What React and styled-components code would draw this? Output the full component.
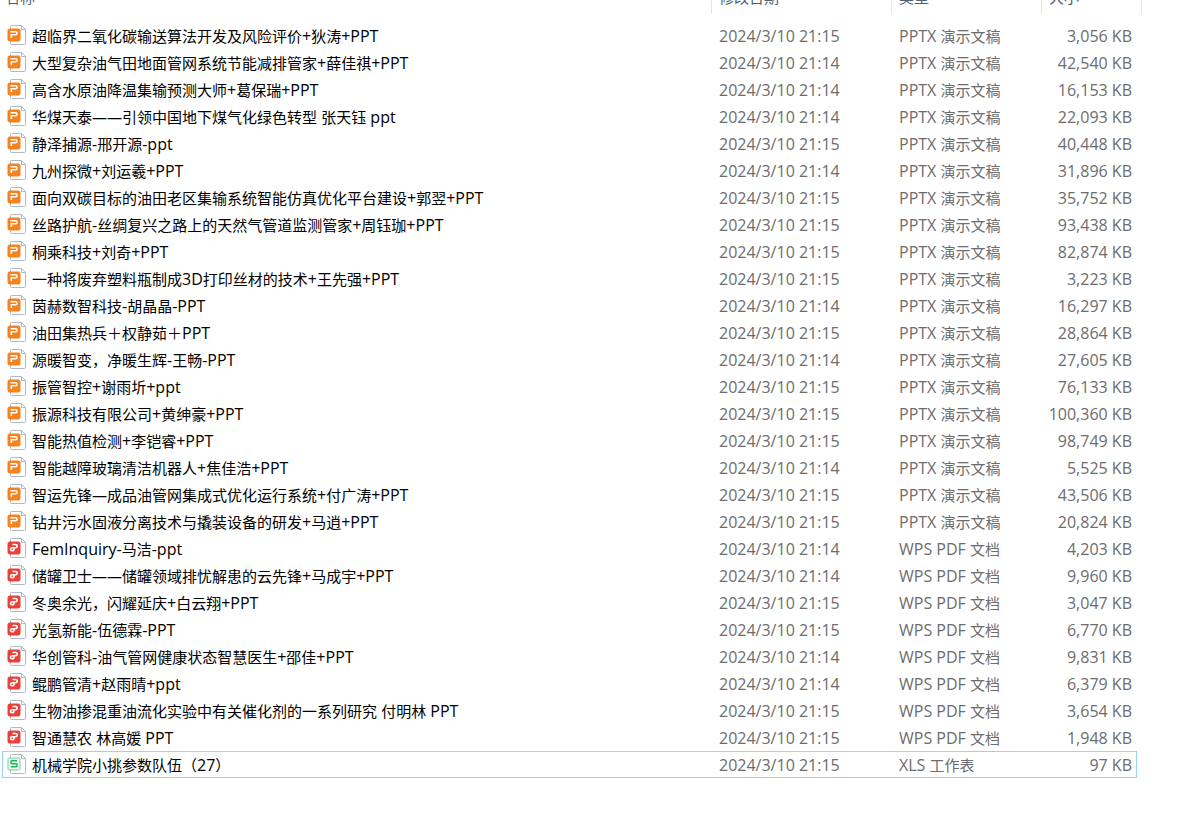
import React from "react";
import styled, { createGlobalStyle } from "styled-components";

const GlobalStyle = createGlobalStyle`
  body {
    margin: 0;
    background-color: #fff;
    font-family: "Open Sans", "Noto Sans CJK SC", sans-serif;
    font-size: 15px;
  }
`;

const Page = styled.main`
  padding: 0 43px 0 2px;
`;

/* The list is scrolled a little, so the header is partly out of view */
const FileTable = styled.table`
  width: 100%;
  margin-top: -12px;
  table-layout: fixed;
  border-collapse: collapse;
`;

const HeadCell = styled.th`
  width: ${(props) => props.$width || "auto"};
  padding: 0 0 8px;
  font-weight: normal;
  text-align: left;

  &:last-child > div {
    margin-right: -5px;
  }
`;

const HeadLabel = styled.div`
  height: 18px;
  padding: 0 7px 8px ${(props) => props.$indent || "7px"};
  border-right: 1px solid #e5e5e5;
  color: #4c607a;
  line-height: 18px;
`;

const Row = styled.tr`
  outline: ${(props) => (props.$focused ? "1px solid #99d1ff" : "none")};
  outline-offset: -1px;
`;

const Cell = styled.td`
  height: 25px;
  padding: 2px 7px 0;
  color: #6d6d6d;
  line-height: 25px;
  white-space: nowrap;
`;

const NameCell = styled(Cell)`
  padding-left: 5px;
`;

const SizeCell = styled(Cell)`
  padding: 2px 5px 0 0;
  text-align: right;
`;

const Latin = styled.span`
  font-size: 16px;
`;

const FileName = styled.div`
  display: flex;
  align-items: center;
  gap: 6px;
  height: 25px;
  color: #000;
`;

const Icon = styled.svg`
  flex: none;
  width: 19px;
  height: 20px;
  margin-bottom: 3px;
`;

const badges = {
  pptx: { fill: "#f5821f", border: "#f5821f", stroke: "#fff" },
  pdf: { fill: "#ea4038", border: "#ea4038", stroke: "#fff" },
  xls: { fill: "#eafaf0", border: "#6fd197", stroke: "#1fb35b" },
};

const marks = {
  pptx: "M3.5 6.8H8.7Q10 6.8 10 8.2T8.7 9.7H4.3V13",
  pdf: "M5.5 6.5H8.3Q10.2 6.5 10.2 8.1T8.6 9.7H5.2Q3.5 9.7 3.5 11.2T5.2 12.8Q7 12.8 7 11V9",
  xls: "M10 6.8H5Q4 6.8 4 7.8V8.7Q4 9.7 5 9.7H9Q10 9.7 10 10.7V11.8Q10 12.8 9 12.8H4",
};

const types = {
  pptx: "PPTX 演示文稿",
  pdf: "WPS PDF 文档",
  xls: "XLS 工作表",
};

const files = [
  ["超临界二氧化碳输送算法开发及风险评价+狄涛+PPT", "15", "pptx", "3,056"],
  ["大型复杂油气田地面管网系统节能减排管家+薛佳祺+PPT", "14", "pptx", "42,540"],
  ["高含水原油降温集输预测大师+葛保瑞+PPT", "14", "pptx", "16,153"],
  ["华煤天泰——引领中国地下煤气化绿色转型 张天钰 ppt", "14", "pptx", "22,093"],
  ["静泽捕源-邢开源-ppt", "15", "pptx", "40,448"],
  ["九州探微+刘运羲+PPT", "14", "pptx", "31,896"],
  ["面向双碳目标的油田老区集输系统智能仿真优化平台建设+郭翌+PPT", "15", "pptx", "35,752"],
  ["丝路护航-丝绸复兴之路上的天然气管道监测管家+周钰珈+PPT", "15", "pptx", "93,438"],
  ["桐乘科技+刘奇+PPT", "15", "pptx", "82,874"],
  ["一种将废弃塑料瓶制成3D打印丝材的技术+王先强+PPT", "15", "pptx", "3,223"],
  ["茵赫数智科技-胡晶晶-PPT", "14", "pptx", "16,297"],
  ["油田集热兵＋权静茹＋PPT", "15", "pptx", "28,864"],
  ["源暖智变，净暖生辉-王畅-PPT", "14", "pptx", "27,605"],
  ["振管智控+谢雨圻+ppt", "15", "pptx", "76,133"],
  ["振源科技有限公司+黄绅豪+PPT", "15", "pptx", "100,360"],
  ["智能热值检测+李铠睿+PPT", "15", "pptx", "98,749"],
  ["智能越障玻璃清洁机器人+焦佳浩+PPT", "14", "pptx", "5,525"],
  ["智运先锋—成品油管网集成式优化运行系统+付广涛+PPT", "15", "pptx", "43,506"],
  ["钻井污水固液分离技术与撬装设备的研发+马逍+PPT", "15", "pptx", "20,824"],
  ["FemInquiry-马洁-ppt", "14", "pdf", "4,203"],
  ["储罐卫士——储罐领域排忧解患的云先锋+马成宇+PPT", "14", "pdf", "9,960"],
  ["冬奥余光，闪耀延庆+白云翔+PPT", "15", "pdf", "3,047"],
  ["光氢新能-伍德霖-PPT", "15", "pdf", "6,770"],
  ["华创管科-油气管网健康状态智慧医生+邵佳+PPT", "14", "pdf", "9,831"],
  ["鲲鹏管清+赵雨晴+ppt", "14", "pdf", "6,379"],
  ["生物油掺混重油流化实验中有关催化剂的一系列研究 付明林 PPT", "15", "pdf", "3,654"],
  ["智通慧农 林高媛 PPT", "15", "pdf", "1,948"],
  ["机械学院小挑参数队伍（27）", "15", "xls", "97"],
];

// Latin letters and digits are set one size larger than the Chinese text
const MixedText = ({ children }) => (
  <div>
    {children
      .split(/([\x20-\x7e]+)/)
      .map((part, i) => (i % 2 ? <Latin key={i}>{part}</Latin> : part))}
  </div>
);

const FileIcon = ({ type }) => (
  <Icon viewBox="0 0 19 20" fill="none" aria-hidden="true">
    <path
      d="M3.5 1.5Q3.5 0.5 4.5 0.5H14.5L18.5 4.5V18.5Q18.5 19.5 17.5 19.5H4.5Q3.5 19.5 3.5 18.5Z"
      fill="#fff"
      stroke="#b4b8c4"
    />
    <path d="M14.5 0.5V4.5H18.5" stroke="#b4b8c4" />
    <rect
      x="1"
      y="4"
      width="12"
      height="12"
      rx="1.5"
      fill={badges[type].fill}
      stroke={badges[type].border}
    />
    <path d={marks[type]} stroke={badges[type].stroke} strokeWidth="1.6" />
  </Icon>
);

const App = () => {
  return (
    <Page>
      <GlobalStyle />
      <FileTable>
        <thead>
          <tr>
            <HeadCell scope="col">
              <HeadLabel $indent="3px">名称</HeadLabel>
            </HeadCell>
            <HeadCell scope="col" $width="180px">
              <HeadLabel>修改日期</HeadLabel>
            </HeadCell>
            <HeadCell scope="col" $width="150px">
              <HeadLabel>类型</HeadLabel>
            </HeadCell>
            <HeadCell scope="col" $width="95px">
              <HeadLabel>大小</HeadLabel>
            </HeadCell>
          </tr>
        </thead>
        <tbody>
          {files.map(([name, minute, type, size]) => (
            <Row key={name} $focused={type === "xls"}>
              <NameCell>
                <FileName>
                  <FileIcon type={type} />
                  <MixedText>{name}</MixedText>
                </FileName>
              </NameCell>
              <Cell>
                <Latin>2024/3/10 21:{minute}</Latin>
              </Cell>
              <Cell>
                <MixedText>{types[type]}</MixedText>
              </Cell>
              <SizeCell>
                <Latin>{size} KB</Latin>
              </SizeCell>
            </Row>
          ))}
        </tbody>
      </FileTable>
    </Page>
  );
};

export default App;
